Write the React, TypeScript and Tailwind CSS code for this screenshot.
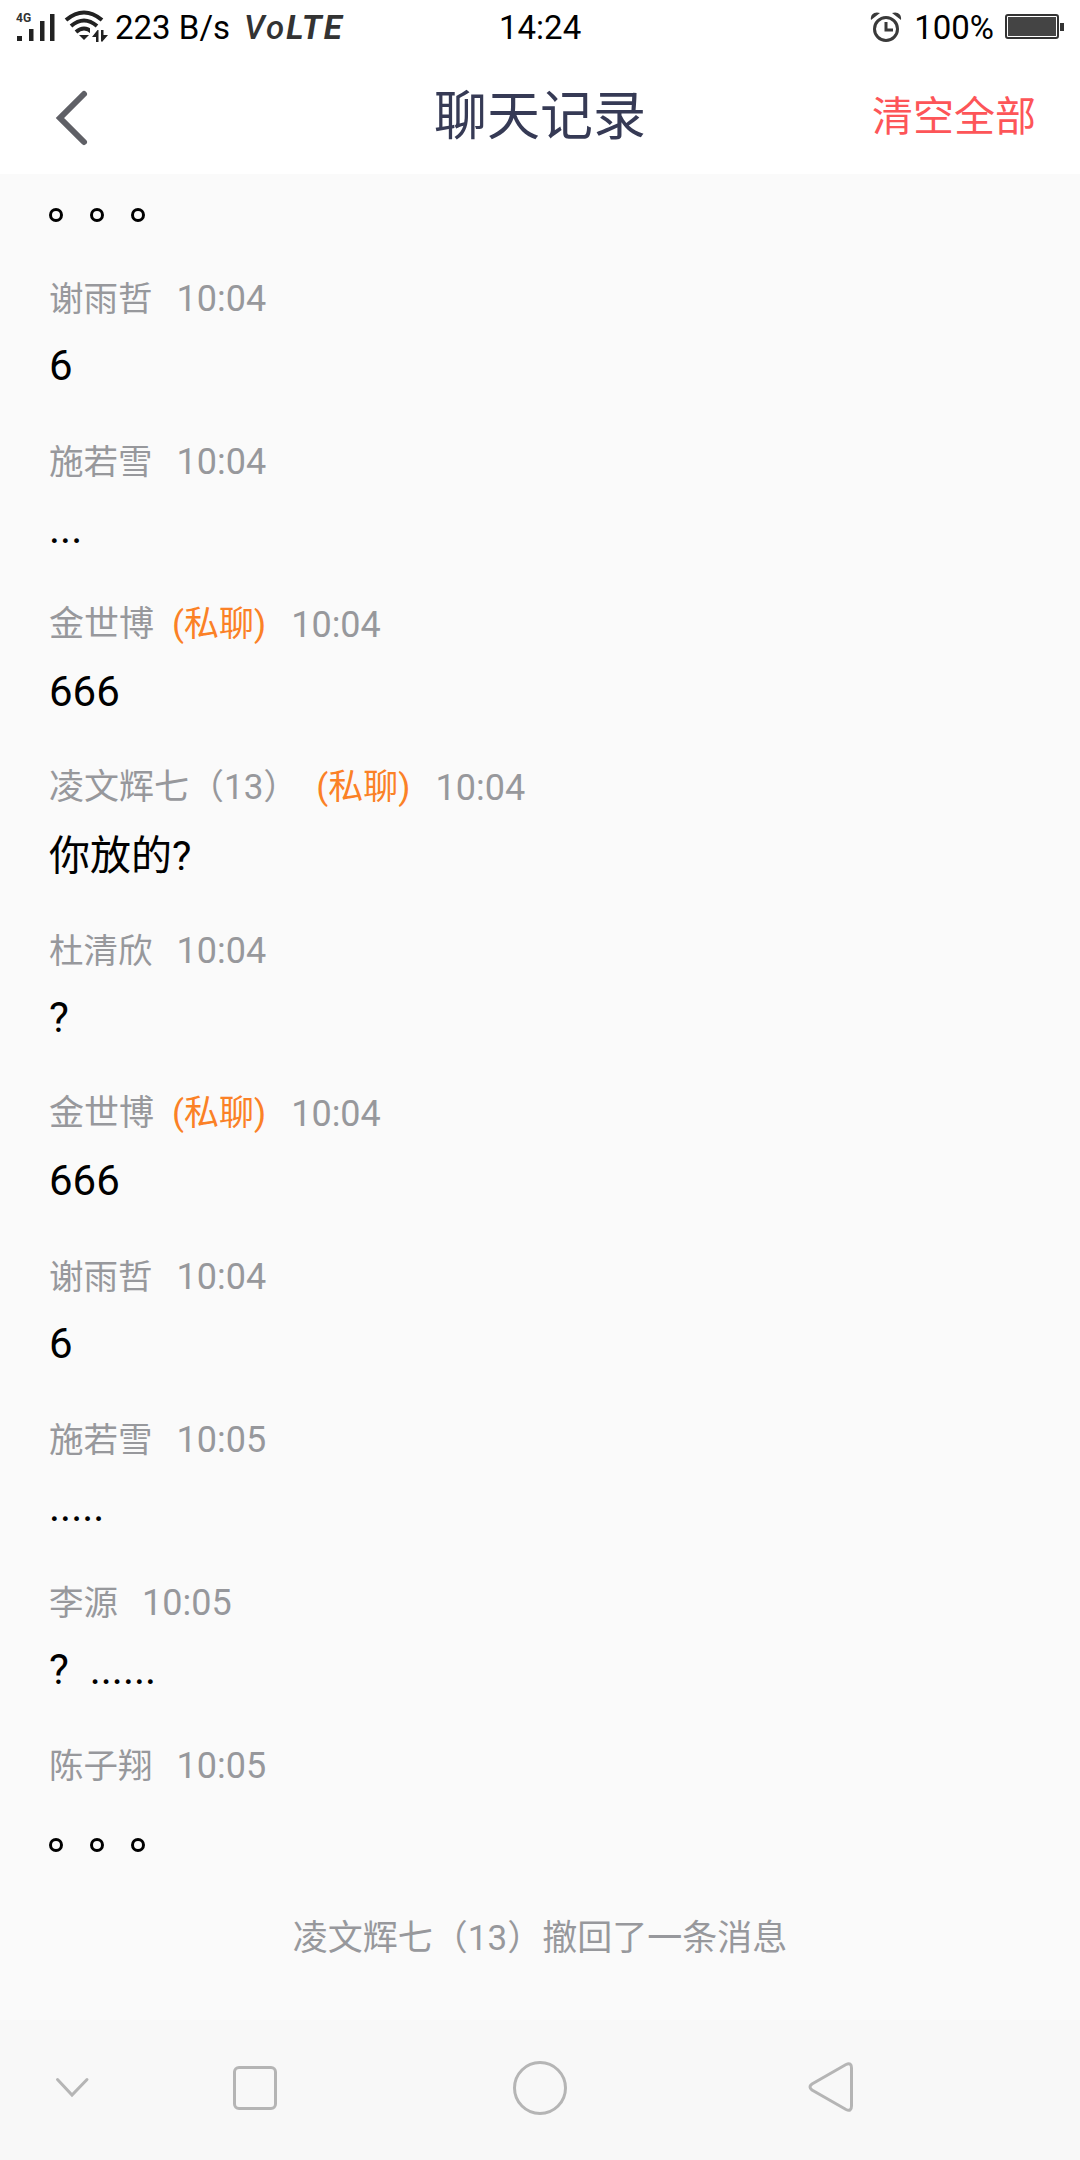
const PRIVATE = "(私聊)";

type Row = { name: string; time: string; text: string; priv?: boolean; kind?: "circles" };

const rows: Row[] = [
  { name: "谢雨哲", time: "10:04", text: "6" },
  { name: "施若雪", time: "10:04", text: "..." },
  { name: "金世博", time: "10:04", text: "666", priv: true },
  { name: "凌文辉七（13）", time: "10:04", text: "你放的?", priv: true },
  { name: "杜清欣", time: "10:04", text: "?" },
  { name: "金世博", time: "10:04", text: "666", priv: true },
  { name: "谢雨哲", time: "10:04", text: "6" },
  { name: "施若雪", time: "10:05", text: "....." },
  { name: "李源", time: "10:05", text: "?  ......" },
  { name: "陈子翔", time: "10:05", text: "。。。", kind: "circles" },
];

function Circles() {
  return (
    <div className="flex gap-[27px] h-[56px] items-center">
      <span className="w-[14px] h-[14px] rounded-full border-[3px] border-black" />
      <span className="w-[14px] h-[14px] rounded-full border-[3px] border-black" />
      <span className="w-[14px] h-[14px] rounded-full border-[3px] border-black" />
    </div>
  );
}

function StatusBar() {
  return (
    <div className="h-[54px] pt-[2px] flex items-center relative pl-[16px] pr-[16px] text-[33px] text-black">
      <svg width="99" height="34" viewBox="0 0 99 34" className="-mt-[6px] shrink-0">
        <text x="0" y="14" fontSize="12" fontWeight="700" fill="#333" fontFamily="Roboto">4G</text>
        <rect x="1" y="28" width="5" height="5" fill="#222" />
        <rect x="13" y="21" width="4.5" height="12" fill="#222" />
        <rect x="24" y="13" width="4.5" height="20" fill="#222" />
        <rect x="34" y="6" width="4.5" height="27" fill="#222" />
        <path d="M50 12 Q68 -3 86 12" stroke="#222" strokeWidth="4" fill="none" />
        <path d="M55 18 Q68 7 81 18" stroke="#222" strokeWidth="4" fill="none" />
        <path d="M60 24 Q68 17 76 24" stroke="#222" strokeWidth="4" fill="none" />
        <path d="M63 27 H73 L68 32 Z" fill="#222" />
        <rect x="74" y="20" width="20" height="14" fill="#fff" />
        <path d="M81.5 22 L76 29 H80 V34 H82.5 V22 Z" fill="#222" />
        <path d="M85 22 H87.5 V27 H92 L86 34 L85 33 Z" fill="#222" />
      </svg>
      <span>223 B/s</span>
      <span className="ml-[14px] italic text-[#333] font-bold tracking-[2px]">
        <span className="font-medium">Vo</span>LTE
      </span>
      <span className="absolute left-[499px]">14:24</span>
      <div className="ml-auto flex items-center">
        <svg width="32" height="32" viewBox="0 0 32 32" className="mr-[12px] -mt-[2px]">
          <circle cx="16" cy="18" r="11.5" stroke="#3a3a3a" strokeWidth="3" fill="none" />
          <path d="M16 11 V19 H23" stroke="#3a3a3a" strokeWidth="3" fill="none" />
          <path d="M1 9 C0 3 5 0 10 2 Z M31 9 C32 3 27 0 22 2 Z" fill="#3a3a3a" />
        </svg>
        <span>100%</span>
        <div className="ml-[11px] -mt-[3px] w-[54px] h-[25px] rounded-[3px] border-2 border-[#333] p-[1px]">
          <div className="w-full h-full bg-[#444]" />
        </div>
        <div className="ml-[1px] -mt-[3px] w-[4px] h-[8px] bg-[#333]" />
      </div>
    </div>
  );
}

function Header() {
  return (
    <div className="h-[120px] flex items-center relative bg-white">
      <svg width="40" height="60" viewBox="0 0 40 60" className="absolute left-[51px] top-[34px]">
        <path d="M33 6 L9 30 L33 54" stroke="#5f6066" strokeWidth="6" fill="none" strokeLinecap="round" />
      </svg>
      <div className="flex-1 text-center text-[53px] text-[#363a55] leading-[64px] mt-[6px]">聊天记录</div>
      <span className="absolute right-[44px] top-[31px] text-[41px] text-[#fd5558] leading-[64px]">清空全部</span>
    </div>
  );
}

function NavBar() {
  return (
    <div className="h-[140px] bg-[#f8f8f8] relative flex items-center justify-center">
      <svg width="36" height="24" viewBox="0 0 36 24" className="absolute left-[54px] top-[56px]">
        <path d="M3.5 3.5 L18 19 L33 3.5" stroke="#b5b5b5" strokeWidth="3" fill="none" strokeLinecap="round" />
      </svg>
      <div className="absolute left-[233px] top-[46px] w-[44px] h-[44px] rounded-[6px] border-[3px] border-[#b5b5b5]" />
      <div className="w-[54px] h-[54px] rounded-full border-[3px] border-[#b5b5b5] mb-[5px]" />
      <svg width="50" height="56" viewBox="0 0 50 56" className="absolute left-[806px] top-[40px]">
        <path d="M40 4.5 Q45.5 2 45.5 8 V46 Q45.5 52 40 49.5 L6 30 Q2 27 6 24 Z" stroke="#b5b5b5" strokeWidth="3" fill="none" />
      </svg>
    </div>
  );
}

export default function App() {
  return (
    <div className="w-[1080px] h-[2160px] flex flex-col bg-[#fafafa] font-['Roboto','Noto_Sans_CJK_SC',sans-serif] overflow-hidden">
      <div className="bg-white">
        <StatusBar />
        <Header />
      </div>

      <div className="flex-1 px-[49px]">
        <div className="h-[62px] pt-[13px]">
          <Circles />
        </div>
        {rows.map((row, idx) => (
          <div key={idx} className="h-[163px] pt-[38px]">
            <div className={row.priv ? "flex items-center text-[35px] leading-[50px] text-[#97989c]" : "flex items-center text-[34.5px] leading-[50px] text-[#97989c]"}>
              <span>{row.name}</span>
              {row.priv && <span className="ml-[18px] text-[#fb8126]">{PRIVATE}</span>}
              <span className={row.priv ? "ml-[25px] text-[36px]" : "ml-[24px] text-[36px]"}>{row.time}</span>
            </div>
            {row.kind === "circles" ? (
              <div className="mt-[26px]">
                <Circles />
              </div>
            ) : (
              <div className={row.priv && row.text !== "666" ? "mt-[15px] text-[41px] leading-[56px] text-black" : "mt-[14px] text-[42px] leading-[56px] text-black whitespace-pre"}>
                {row.text}
              </div>
            )}
          </div>
        ))}
        <div className="text-center text-[35px] text-[#97989c] leading-[50px] mt-[48px] -mx-[49px]">
          凌文辉七（13）撤回了一条消息
        </div>
      </div>

      <NavBar />
    </div>
  );
}
